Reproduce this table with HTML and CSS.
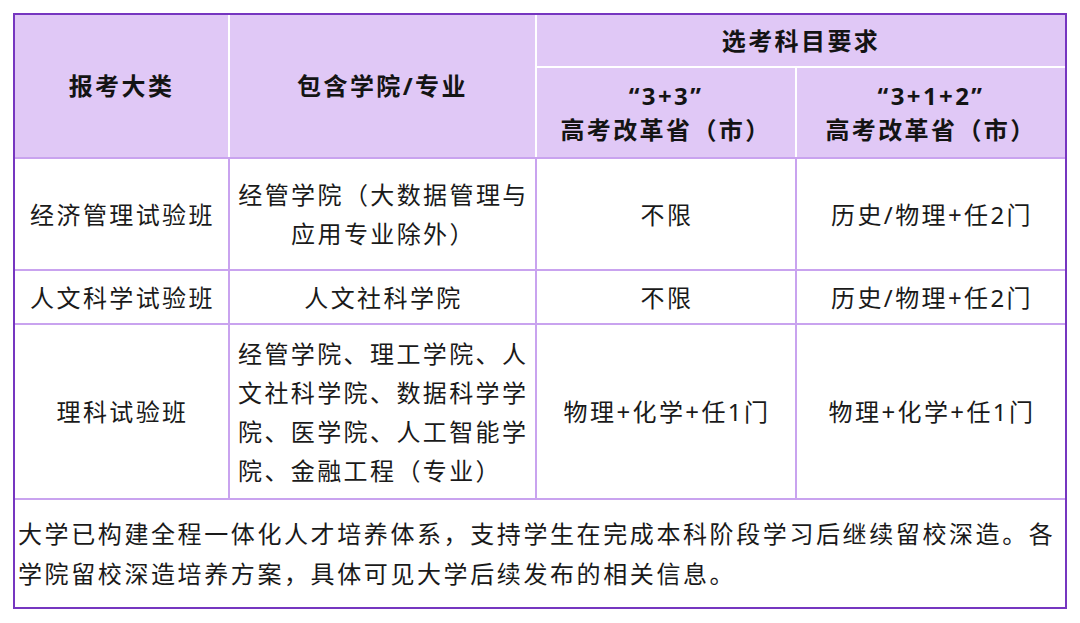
FILE: index.html
```html
<!DOCTYPE html>
<html lang="zh-CN">
<head>
<meta charset="utf-8">
<title>选考科目要求</title>
<link rel="stylesheet" href="styles.css">
</head>
<body>
<div class="frame">
  <table class="req">
    <colgroup>
      <col class="c1"><col class="c2"><col class="c3"><col class="c4">
    </colgroup>
    <thead>
      <tr class="h1">
        <th rowspan="2" class="hb">报考大类</th>
        <th rowspan="2" class="hb">包含学院/专业</th>
        <th colspan="2">选考科目要求</th>
      </tr>
      <tr class="h2">
        <th class="hb">“3+3”<br>高考改革省（市）</th>
        <th class="hb">“3+1+2”<br>高考改革省（市）</th>
      </tr>
    </thead>
    <tbody>
      <tr class="r1">
        <td>经济管理试验班</td>
        <td>经管学院（大数据管理与应用专业除外）</td>
        <td>不限</td>
        <td>历史/物理+任2门</td>
      </tr>
      <tr class="r2">
        <td>人文科学试验班</td>
        <td>人文社科学院</td>
        <td>不限</td>
        <td>历史/物理+任2门</td>
      </tr>
      <tr class="r3">
        <td>理科试验班</td>
        <td class="left">经管学院、理工学院、人文社科学院、数据科学学院、医学院、人工智能学院、金融工程（专业）</td>
        <td>物理+化学+任1门</td>
        <td>物理+化学+任1门</td>
      </tr>
      <tr class="r4">
        <td colspan="4" class="note">大学已构建全程一体化人才培养体系，支持学生在完成本科阶段学习后继续留校深造。各学院留校深造培养方案，具体可见大学后续发布的相关信息。</td>
      </tr>
    </tbody>
  </table>
</div>
</body>
</html>
```

FILE: styles.css
```css
html, body {
  margin: 0;
  padding: 0;
  background: #ffffff;
}
body {
  padding: 13px;
  font-family: "Noto Sans", "Noto Sans CJK SC", sans-serif;
  color: #1a1a1a;
}
.frame {
  width: 1050px;
  border: 2px solid #7636c0;
}
.req {
  width: 1050px;
  table-layout: fixed;
  border-collapse: collapse;
  border-style: hidden;
  font-size: 24px;
  letter-spacing: 2.4px;
}
.c1 { width: 214px; }
.c2 { width: 307px; }
.c3 { width: 260px; }
.c4 { width: 269px; }

.req th {
  background: #e0c8f6;
  border: 2px solid #ffffff;
  font-weight: 700;
  text-align: center;
  vertical-align: middle;
  line-height: 34px;
  padding: 0;
  color: #141414;
}
.req th.hb {
  border-bottom-color: #c9a3ef;
}
.h1 { height: 52px; }
.h2 { height: 91px; }

.req td {
  border: 2px solid #c9a3ef;
  text-align: center;
  vertical-align: middle;
  line-height: 39px;
  padding: 0 6px 0 8px;
}
.req td.left { text-align: left; }
.r1 { height: 112px; }
.r2 { height: 54px; }
.r3 { height: 175px; }
.r4 { height: 108px; }
.req td.note {
  text-align: left;
  line-height: 40px;
  letter-spacing: 2.6px;
  padding: 0 0 0 3px;
}
```
